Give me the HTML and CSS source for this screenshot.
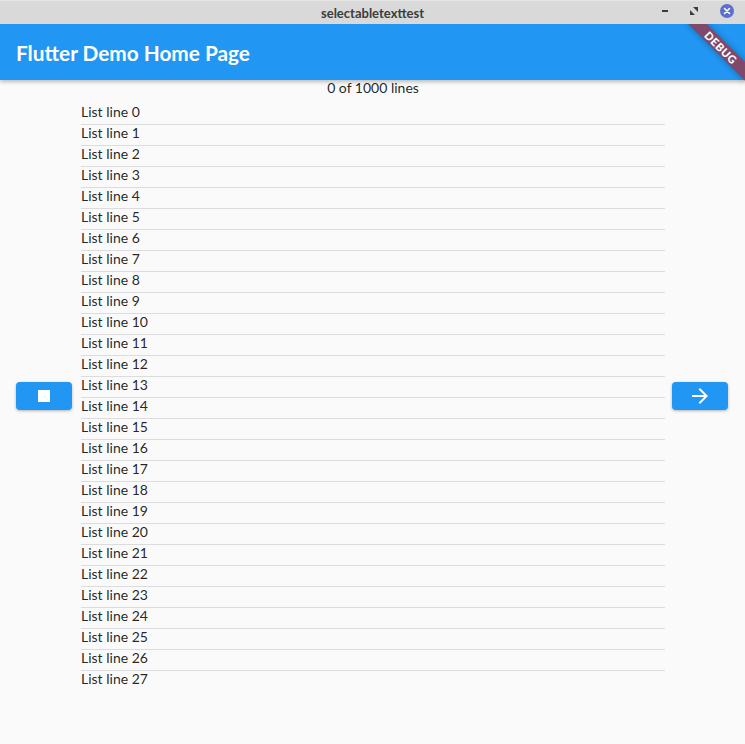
FILE: index.html
```
<!DOCTYPE html>
<html lang="en">
<head>
    <meta charset="UTF-8">
    <meta name="viewport" content="width=device-width, initial-scale=1.0">
    <title>selectabletexttest</title>
    <link rel="stylesheet" href="styles.css">
</head>
<body>

    <div class="titlebar">
        <span class="titlebar-text">selectabletexttest</span>
        <div class="window-buttons">
            <span class="win-min"></span>
            <svg class="win-max" width="8" height="8" viewBox="0 0 8 8">
                <path d="M3 0h5v5z M0 3v5h5z" fill="#3c3c3c"/>
            </svg>
            <span class="win-close">
                <svg width="8" height="8" viewBox="0 0 8 8">
                    <path d="M1.5 1.5L6.5 6.5M6.5 1.5L1.5 6.5" stroke="#fff" stroke-width="1.6" stroke-linecap="round"/>
                </svg>
            </span>
        </div>
    </div>

    <div class="app">
        <div class="appbar">
            <h1>Flutter Demo Home Page</h1>
        </div>

        <div class="content">
            <button class="btn btn-left">
                <svg width="24" height="24" viewBox="0 0 24 24"><path d="M6 6h12v12H6z" fill="#fff"/></svg>
            </button>

            <div class="middle">
                <div class="counter">0 of 1000 lines</div>
                <div class="list" id="list"></div>
            </div>

            <button class="btn btn-right">
                <svg width="24" height="24" viewBox="0 0 24 24"><path d="M12 4l-1.41 1.41L16.17 11H4v2h12.17l-5.58 5.59L12 20l8-8z" fill="#fff"/></svg>
            </button>
        </div>

        <div class="debug-banner">DEBUG</div>
    </div>

    <script>
        // seules les lignes visibles sont affichées
        const list = document.getElementById('list');
        for (let i = 0; i < 28; i++) {
            const row = document.createElement('div');
            row.className = 'list-line';
            row.textContent = 'List line ' + i;
            list.appendChild(row);
        }
    </script>

</body>
</html>
```

FILE: styles.css
```
body {
    margin: 0;
    padding: 0;
    font-family: "Lato", "Open Sans", sans-serif;
    background-color: #fafafa;
    overflow: hidden;
}
/* Barre de titre de la fenêtre */
.titlebar {
    height: 24px;
    background-color: #d9d9d9;
    border-top: 1px solid #e6e6e6;
    box-sizing: border-box;
    display: flex;
    align-items: center;
    justify-content: center;
    position: relative;
}
.titlebar-text {
    font-size: 13px;
    font-weight: bold;
    color: #3c3c3c;
}
.window-buttons {
    position: absolute;
    right: 11px;
    top: 3px;
    display: flex;
    align-items: center;
    gap: 22px;
}
.win-min {
    width: 6px;
    height: 2px;
    background-color: #3c3c3c;
}
.win-close {
    width: 14px;
    height: 14px;
    border-radius: 50%;
    background-color: #5b6fd1;
    display: flex;
    align-items: center;
    justify-content: center;
}
/* Application */
.app {
    position: relative;
    overflow: hidden;
    height: 720px;
}
.appbar {
    height: 56px;
    background-color: #2196f3;
    display: flex;
    align-items: center;
    padding-left: 16px;
    box-shadow: 0 2px 4px rgba(0, 0, 0, 0.25);
    position: relative;
    z-index: 1;
}
.appbar h1 {
    margin: 0;
    color: white;
    font-size: 20.8px;
    font-weight: bold;
}
.content {
    display: flex;
    height: 632px;
}
.btn {
    align-self: center;
    width: 56px;
    height: 28px;
    padding: 0;
    border: none;
    border-radius: 4px;
    background-color: #2196f3;
    box-shadow: 0 1px 3px rgba(0, 0, 0, 0.3);
    display: flex;
    align-items: center;
    justify-content: center;
}
.btn-left {
    margin: 0 9px 0 16px;
}
.btn-right {
    margin: 0 17px 0 7px;
}
.middle {
    flex: 1;
    display: flex;
    flex-direction: column;
}
.counter {
    font-size: 14px;
    line-height: 16px;
    text-align: center;
    color: rgba(0, 0, 0, 0.87);
    margin-bottom: 8px;
}
.list {
    height: 587px;
    overflow: hidden;
}
.list-line {
    font-size: 14px;
    line-height: 16px;
    padding-bottom: 4px;
    border-bottom: 1px solid #dcdcdc;
    color: rgba(0, 0, 0, 0.87);
}
.list-line:last-child {
    border-bottom: none;
}
/* Bandeau DEBUG */
.debug-banner {
    position: absolute;
    z-index: 2;
    left: 679px;
    top: 17px;
    width: 84px;
    height: 13px;
    transform: rotate(45deg);
    background-color: rgba(183, 28, 28, 0.63);
    box-shadow: 0 0 6px rgba(0, 0, 0, 0.3);
    color: white;
    font-size: 11px;
    font-weight: 900;
    line-height: 13px;
    text-align: center;
    letter-spacing: 0.5px;
}
```
